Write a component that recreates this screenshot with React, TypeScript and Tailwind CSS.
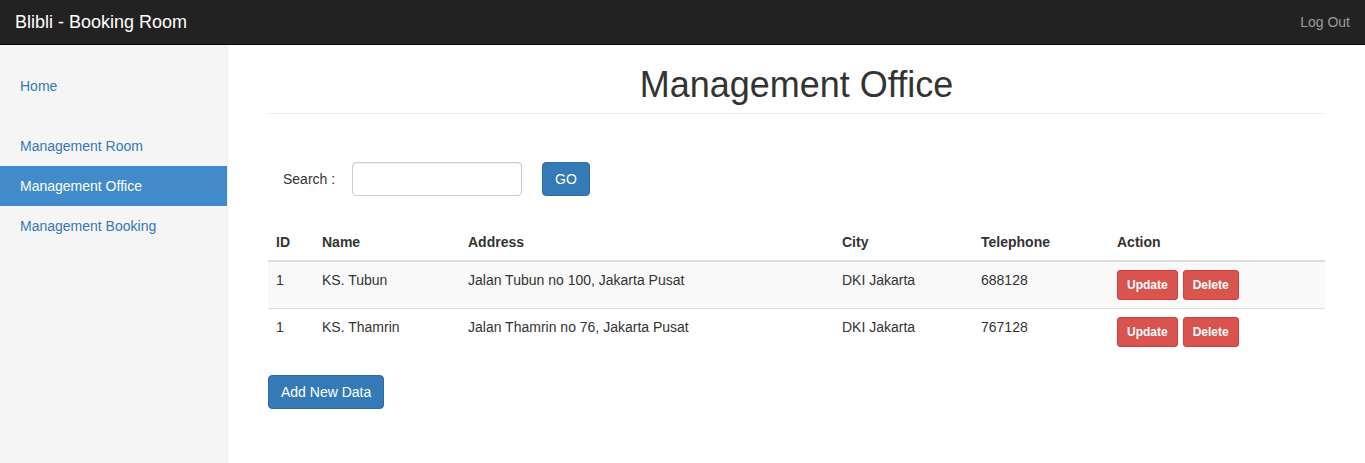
import React from "react";

const rows = [
  { id: "1", name: "KS. Tubun", address: "Jalan Tubun no 100, Jakarta Pusat", city: "DKI Jakarta", tel: "688128" },
  { id: "1", name: "KS. Thamrin", address: "Jalan Thamrin no 76, Jakarta Pusat", city: "DKI Jakarta", tel: "767128" },
];

export default function App() {
  return (
    <div
      className="flex flex-col h-screen text-[14px] leading-[20px] text-[#333]"
      style={{ fontFamily: '"Liberation Sans", Arial, sans-serif' }}
    >
      <div className="h-[45px] shrink-0 bg-[#222] border-b border-[#080808] flex items-center justify-between px-[15px]">
        <span className="text-[18px] leading-[20px] text-white">Blibli - Booking Room</span>
        <span className="text-[#9d9d9d]">Log Out</span>
      </div>
      <div className="flex flex-1 min-h-0">
        <div className="w-[228px] shrink-0 bg-[#f5f5f5] border-r border-[#eee] pt-[21px]">
          <ul>
            <li className="px-[20px] py-[10px] text-[#337ab7]">Home</li>
          </ul>
          <ul className="mt-[20px]">
            <li className="px-[20px] py-[10px] text-[#337ab7]">Management Room</li>
            <li className="px-[20px] py-[10px] text-white bg-[#428bca]">Management Office</li>
            <li className="px-[20px] py-[10px] text-[#337ab7]">Management Booking</li>
          </ul>
        </div>
        <div className="flex-1 px-[40px] pt-[20px]">
          <div className="border-b border-[#eee] pb-[9px]">
            <h1 className="text-center text-[36px] leading-[39px] font-normal">Management Office</h1>
          </div>
          <div className="mt-[48px] flex items-center">
            <span className="ml-[15px] w-[69px] -mt-[1px]">Search :</span>
            <input
              type="text"
              className="w-[170px] h-[34px] border border-[#ccc] rounded-[4px] shadow-[inset_0_1px_1px_rgba(0,0,0,0.075)] outline-none px-[12px]"
            />
            <button className="ml-[20px] h-[34px] px-[12px] bg-[#337ab7] border border-[#2e6da4] rounded-[4px] text-white">
              GO
            </button>
          </div>
          <table className="mt-[28px] w-full table-fixed border-collapse">
            <thead>
              <tr>
                <th className="w-[46px] text-left font-bold p-[8px] border-b-2 border-[#ddd]">ID</th>
                <th className="w-[146px] text-left font-bold p-[8px] border-b-2 border-[#ddd]">Name</th>
                <th className="w-[374px] text-left font-bold p-[8px] border-b-2 border-[#ddd]">Address</th>
                <th className="w-[139px] text-left font-bold p-[8px] border-b-2 border-[#ddd]">City</th>
                <th className="w-[136px] text-left font-bold p-[8px] border-b-2 border-[#ddd]">Telephone</th>
                <th className="text-left font-bold p-[8px] border-b-2 border-[#ddd]">Action</th>
              </tr>
            </thead>
            <tbody>
              {rows.map((r, i) => (
                <tr key={i} className={i % 2 === 0 ? "bg-[#f9f9f9]" : ""}>
                  <td className="p-[8px] align-top border-t border-[#ddd]">{r.id}</td>
                  <td className="p-[8px] align-top border-t border-[#ddd]">{r.name}</td>
                  <td className="p-[8px] align-top border-t border-[#ddd]">{r.address}</td>
                  <td className="p-[8px] align-top border-t border-[#ddd]">{r.city}</td>
                  <td className="p-[8px] align-top border-t border-[#ddd]">{r.tel}</td>
                  <td className="p-[8px] align-top border-t border-[#ddd]">
                    <div className="flex gap-[5px]">
                      <button className="h-[30px] px-[9px] bg-[#d9534f] border border-[#d43f3a] rounded-[3px] text-white text-[12px] font-bold">
                        Update
                      </button>
                      <button className="h-[30px] px-[9px] bg-[#d9534f] border border-[#d43f3a] rounded-[3px] text-white text-[12px] font-bold">
                        Delete
                      </button>
                    </div>
                  </td>
                </tr>
              ))}
            </tbody>
          </table>
          <button className="mt-[20px] h-[34px] px-[12px] bg-[#337ab7] border border-[#2e6da4] rounded-[4px] text-white">
            Add New Data
          </button>
        </div>
      </div>
    </div>
  );
}
